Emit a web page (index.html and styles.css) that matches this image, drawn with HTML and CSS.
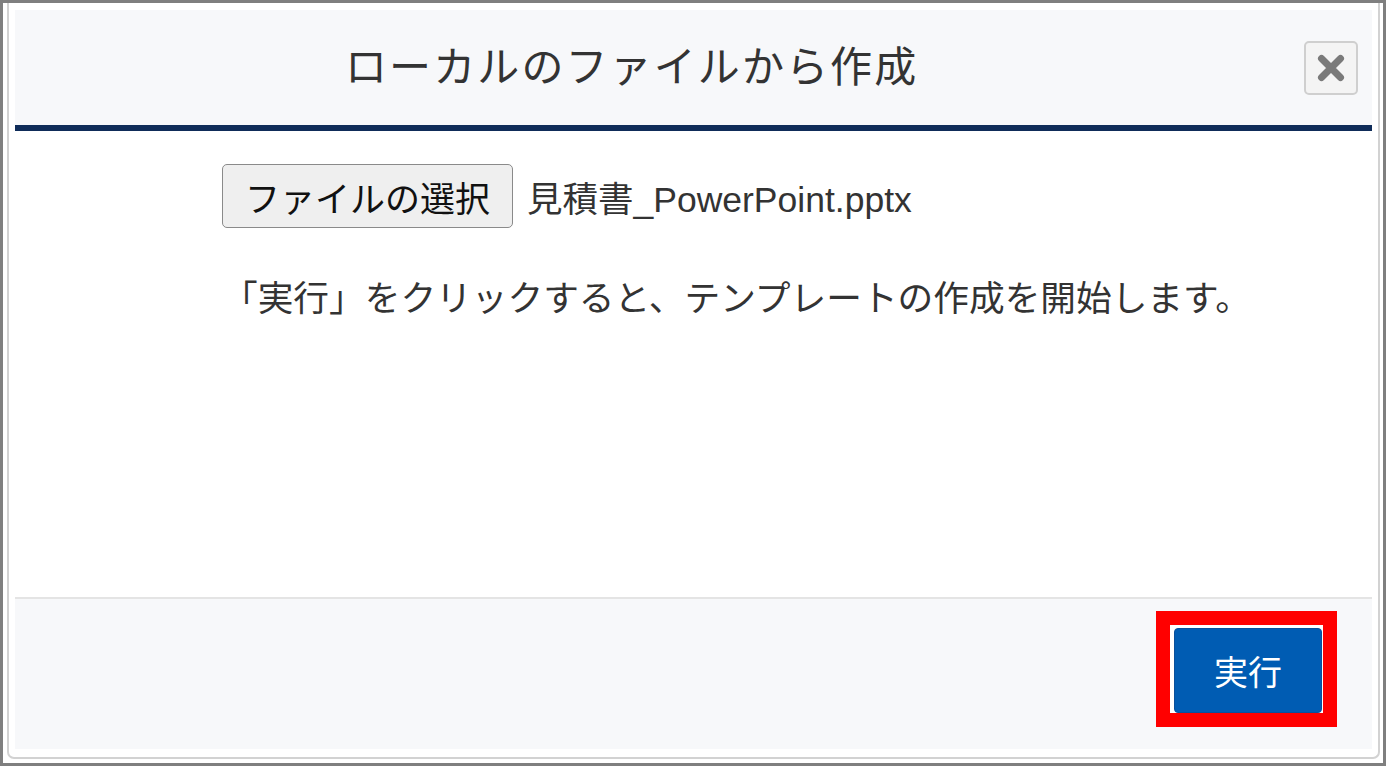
FILE: index.html
```html
<!DOCTYPE html>
<html lang="ja">
<head>
<meta charset="utf-8">
<title>ローカルのファイルから作成</title>
<link rel="stylesheet" href="styles.css">
</head>
<body>
<div class="frame">
  <div class="dialog">
    <div class="dialog-header">
      <h1 class="dialog-title">ローカルのファイルから作成</h1>
      <button class="close-btn" type="button" aria-label="閉じる">
        <svg width="30" height="28" viewBox="0 0 30 28"><path d="M5.5 4.5 L24.5 23.5 M24.5 4.5 L5.5 23.5" stroke="#7a7a7a" stroke-width="7" stroke-linecap="round" fill="none"/></svg>
      </button>
    </div>
    <div class="dialog-body">
      <div class="file-row">
        <span class="file-btn">ファイルの選択</span>
        <span class="file-name">見積書_PowerPoint.pptx</span>
      </div>
      <p class="message">「実行」をクリックすると、テンプレートの作成を開始します。</p>
    </div>
    <div class="dialog-footer">
      <span class="highlight"><button class="run-btn" type="button">実行</button></span>
    </div>
  </div>
</div>
</body>
</html>
```
FILE: styles.css
```css
* { box-sizing: border-box; }
html, body { margin: 0; padding: 0; background: #fff; }
body {
  font-family: "Liberation Sans", "Noto Sans CJK JP", sans-serif;
  color: #333;
}
.frame {
  width: 1386px;
  height: 766px;
  border: 3px solid #7f7f7f;
  padding: 0 3px 4px 4px;
}
.dialog {
  height: 100%;
  border: 2px solid #d2d2d2;
  border-top: none;
  border-radius: 0 0 7px 7px;
  padding: 7px 6px 8px 6px;
  display: flex;
  flex-direction: column;
}
.dialog-header {
  height: 121px;
  background: #f7f8fa;
  border-bottom: 6px solid #0f2c59;
  display: flex;
  align-items: center;
  padding-right: 14px;
}
.dialog-title {
  flex: 1;
  margin: 0;
  padding: 0 0 8px 330px;
  font-family: "Noto Sans CJK JP", sans-serif;
  font-weight: normal;
  font-size: 42px;
  letter-spacing: 2.1px;
  color: #333;
  line-height: 1;
}
.close-btn {
  width: 54px;
  height: 54px;
  border: 2px solid #cfcfcf;
  border-radius: 5px;
  background: #f4f4f4;
  padding: 0;
  display: flex;
  align-items: center;
  justify-content: center;
}
.dialog-body {
  flex: 1;
  background: #fff;
  padding: 33px 0 0 207px;
}
.file-row {
  display: flex;
  align-items: center;
  gap: 14px;
}
.file-btn {
  height: 64px;
  width: 291px;
  border: 1.5px solid #8a8a8a;
  border-radius: 5px;
  background: #efefef;
  display: flex;
  align-items: center;
  justify-content: center;
  font-family: "Noto Sans CJK JP", sans-serif;
  font-size: 35px;
  color: #111;
}
.file-name {
  font-family: "Liberation Sans", "Noto Sans CJK JP", sans-serif;
  font-size: 35.5px;
  color: #333;
}
.message {
  margin: 42px 0 0 0;
  font-family: "Noto Sans CJK JP", sans-serif;
  font-size: 35.7px;
  line-height: 51px;
  color: #333;
}
.dialog-footer {
  height: 152px;
  background: #f7f8fa;
  border-top: 2px solid #e4e4e4;
  display: flex;
  justify-content: flex-end;
  align-items: flex-start;
  padding: 12px 35px 0 0;
}
.highlight {
  display: block;
  border: 14px solid #f00;
  padding: 3px 1px 0 4px;
  background: #fff;
}
.run-btn {
  display: block;
  width: 148px;
  height: 85px;
  border: 1px solid #0a4f9a;
  border-radius: 4px;
  background: #005cb3;
  color: #fff;
  font-family: "Noto Sans CJK JP", sans-serif;
  font-size: 34px;
  padding: 0;
}
```
